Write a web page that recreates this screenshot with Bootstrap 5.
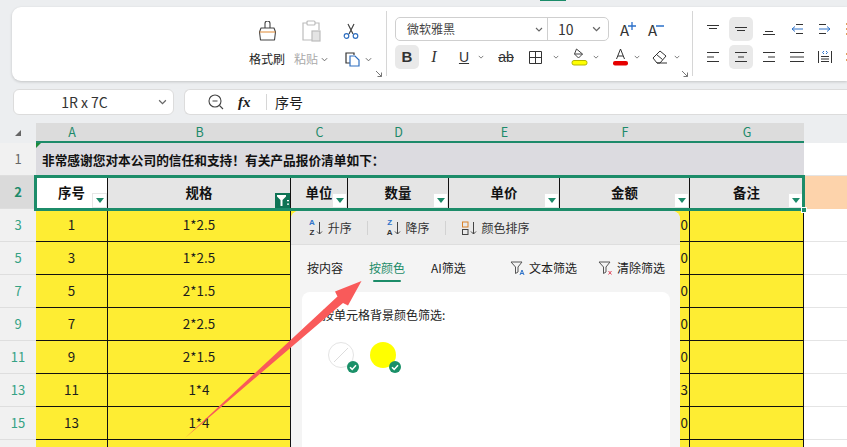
<!DOCTYPE html>
<html lang="zh-CN">
<head>
  <meta charset="UTF-8" />
  <title>表格筛选</title>
  <link href="https://cdn.jsdelivr.net/npm/bootstrap@5.3.0/dist/css/bootstrap.min.css" rel="stylesheet">
  <style>
    html, body { height: 447px; overflow: hidden; }
    body {
      background: #eceef0;
      color: #1c1c1c;
      font-family: "Noto Sans CJK SC", "Liberation Sans", sans-serif;
      font-size: 12px;
      width: 847px;
      position: relative;
    }
    svg { display: block; flex: none; }
    .top-strip { height: 7px; }
    .top-mark { width: 26px; height: 1px; margin-left: 540px; background: #1a8c69; }

    .ribbon {
      height: 74px;
      margin-left: 12px;
      background: #fff;
      border-radius: 9px 0 0 9px;
      box-shadow: 0 1px 3px rgba(0,0,0,.18);
      padding-left: 233px;
      overflow: hidden;
    }
    .rb-group { position: relative; height: 74px; flex: none; }
    .rb-group-clip { width: 141px; }
    .rb-sep { width: 1px; height: 65px; margin-top: 4px; background: #d6d6d6; flex: none; }
    .rb-launch { position: absolute; right: 3px; bottom: 3px; }
    .clip-grid { display: grid; grid-template-columns: 44px 44px 36px; grid-template-rows: 27px 24px; row-gap: 3px; padding-top: 10px; width: 124px; }
    .clip-cell { display: flex; align-items: center; justify-content: center; gap: 3px; }
    .clip-copy { justify-content: flex-start; padding-left: 12px; gap: 5px; white-space: nowrap; }
    .clip-label { font-size: 12px; line-height: 24px; white-space: nowrap; }
    .is-muted { color: #a9a9a9; }
    .font-col { width: 305px; padding-top: 10px; padding-left: 8px; }
    .font-pick { height: 24px; border: 1px solid #cfcfcf; border-radius: 5px; width: 214px; display: flex; font-size: 12px; }
    .font-name { width: 152px; padding-left: 11px; display: flex; align-items: center; justify-content: space-between; padding-right: 4px; border-right: 1px solid #cfcfcf; color: #444; }
    .font-size-box { flex: 1; display: flex; align-items: center; justify-content: space-between; padding: 0 7px 0 10px; font-size: 14px; color: #333; }
    .grow-btns { position: absolute; left: 233px; top: 10px; display: flex; gap: 10px; font-size: 15px; line-height: 26px; color: #333; }
    .grow-btn { width: 18px; position: relative; }
    .grow-mark { position: absolute; left: 8px; top: 5px; }
    .fmt-row { display: flex; align-items: center; height: 24px; margin-top: 4px; position: relative; }
    .fmt-btn { width: 24px; height: 24px; border-radius: 5px; display: flex; align-items: center; justify-content: center; font-size: 14px; color: #333; flex: none; }
    .fmt-on { background: #e9e9e9; }
    .fmt-bold { font-weight: 700; font-family: "Liberation Sans", sans-serif; font-size: 15px; }
    .fmt-ital { font-style: italic; font-family: "Liberation Serif", serif; font-size: 16px; margin-left: 3px; }
    .fmt-und { text-decoration: underline; font-family: "Liberation Sans", sans-serif; margin-left: 6px; }
    .fmt-ab { text-decoration: line-through; font-family: "Liberation Sans", sans-serif; margin-left: 8px; }
    .fmt-m5 { margin-left: 5px; }
    .fmt-m6 { margin-left: 6px; }
    .fmt-m7 { margin-left: 7px; }
    .chev-slot { width: 10px; display: flex; justify-content: center; flex: none; }
    .align-grid { display: grid; grid-template-columns: repeat(6, 24px); grid-auto-rows: 24px; gap: 4px; padding: 10px 0 0 8px; }
    .align-btn { border-radius: 5px; display: flex; align-items: center; justify-content: center; }

    .bar-row { height: 26px; margin: 8px 0 8px 13px; gap: 10px; }
    .name-box, .formula-box { background: #fff; border: 1px solid #dcdcdc; border-radius: 6px; display: flex; align-items: center; }
    .name-box { width: 161px; justify-content: center; position: relative; font-size: 14px; color: #333; flex: none; padding-right: 18px; }
    .name-box svg { position: absolute; right: 6px; top: 9px; }
    .formula-box { flex: 1; border-right: 0; border-radius: 6px 0 0 6px; padding-left: 23px; font-size: 14px; }
    .fx-mark { font-family: "Liberation Serif", serif; font-style: italic; font-weight: 700; font-size: 15px; margin-left: 14px; width: 17px; }
    .fx-sep { width: 1px; height: 16px; background: #d6d6d6; margin: 0 8px 0 11px; }

    .sheet-wrap { height: 324px; overflow: hidden; }
    .sheet { table-layout: fixed; border-collapse: separate; border-spacing: 0; width: 847px; font-size: 13.4px; }
    .sheet td, .sheet th { padding: 0; text-align: center; vertical-align: middle; overflow: hidden; white-space: nowrap; position: relative; font-weight: 400; }
    .col-row { height: 20px; }
    .col-row th { background: #dcdcdc; color: #1d8a6a; font-size: 12.5px; line-height: 1; border-bottom: 2px solid #1d8a6a; }
    .col-row .sheet-corner { background: #eceef0; border-bottom: 0; }
    .col-row .sheet-rest { background: #eceef0; border-bottom: 0; }
    .corner-mark { margin: 0 0 0 14px; }
    .sheet .row-no { background: #f1f1f1; color: #35a284; font-size: 13px; border-bottom: 1px solid #dedede; }
    .title-row { height: 33px; }
    .title-row td.title-cell { background: #dcdbe0; text-align: left; padding-left: 6px; font-weight: 700; font-size: 12.7px; color: #111; overflow: visible; }
    .sheet .title-row .row-no { color: #666; }
    .title-tick { position: absolute; left: 0; top: 0; width: 0; height: 0; border-top: 5px solid #1d8a3a; border-right: 5px solid transparent; }
    .head-row { height: 33px; }
    .head-row td { background: #e5e5e5; font-weight: 700; border-right: 1px solid #111; color: #111; }
    .head-row td.first-head { background: #fff; }
    .sheet .head-row .row-no { background: #dadada; color: #1d8a6a; border-right: 0; }
    .sheet .head-row .peach { background: #fdd3ab; border-right: 0; }
    .data-row { height: 33px; }
    .data-row td { background: #feed33; border-right: 1px solid #111; border-bottom: 1px solid #111; color: #1c1c1c; padding-bottom: 1px; }
    .data-row td.num-cell { text-align: right; padding-right: 1px; }
    .sheet .data-row .row-no { border-right: 0; border-bottom: 1px solid #dedede; }
    .sheet .data-row .blank { background: #fff; border-right: 0; border-bottom: 1px solid #e4e4e4; }
    .title-row .blank { background: #fff; border-bottom: 1px solid #e4e4e4; }

    .drop-btn { position: absolute; right: 0; bottom: 1px; width: 15px; height: 15px; background: #fff; border: 1px solid #e6e6e6; }
    .drop-btn::after { content: ""; position: absolute; left: 2.5px; top: 4px; border-left: 4px solid transparent; border-right: 4px solid transparent; border-top: 5px solid #1d8a6a; }
    .drop-active { background: #0e7355; border: 0; display: flex; align-items: center; justify-content: center; }
    .drop-active::after { display: none; }

    .sel-box { position: absolute; left: 34px; top: 175px; width: 771px; height: 36px; border: 3px solid #1c8c69; pointer-events: none; }
    .sel-box::after { content: ""; position: absolute; right: -5px; bottom: -5px; width: 6px; height: 6px; background: #1c8c69; border: 1px solid #fff; }

    .filter-pop { position: absolute; left: 291px; top: 211px; width: 389px; height: 236px; background: #f4f4f4; border-radius: 8px 8px 0 0; overflow: hidden; }
    .pop-tools { height: 34px; background: #e9e9e9; border-bottom: 1px solid #dedede; padding-left: 18px; display: flex; align-items: center; }
    .pop-tool { display: flex; align-items: center; gap: 5px; color: #333; }
    .pop-div { width: 1px; height: 14px; background: #d2d2d2; margin: 0 19px 0 15px; }
    .pop-div-b { margin-right: 16px; }
    .sort-az { display: flex; flex-direction: column; font-size: 8px; line-height: 9.5px; font-weight: 700; font-family: "Liberation Sans", sans-serif; text-align: center; }
    .sort-az span { display: block; }
    .sort-blue { color: #2f73c9; }
    .sort-mix { display: flex; align-items: center; gap: 1px; }
    .pop-tabs { height: 47px; padding: 12px 0 0 16px; display: flex; align-items: flex-start; }
    .pop-tab { width: 62px; line-height: 22px; flex: none; position: relative; }
    .pop-tab-on { color: #1c8c69; }
    .pop-tab-on::after { content: ""; position: absolute; left: 4px; top: 23px; width: 28px; height: 2px; background: #1c8c69; border-radius: 1px; }
    .pop-tab-ai { width: 79px; }
    .pop-act { display: flex; align-items: center; gap: 3px; line-height: 22px; width: 88px; flex: none; }
    .pop-card { background: #fff; margin: 0 10px 0 11px; height: 155px; border-radius: 8px 8px 0 0; padding: 13px 0 0 20px; }
    .pop-hint { line-height: 20px; color: #222; }
    .swatch-row { display: flex; gap: 16px; margin-top: 17px; margin-left: 6px; }
    .swatch { width: 26px; height: 26px; border-radius: 50%; position: relative; }
    .swatch-none { border: 1px solid #e4e4e4; background: #fff; }
    .swatch-yellow { background: #ffff00; }
    .swatch-check { position: absolute; right: -5px; bottom: -5px; width: 12px; height: 12px; border-radius: 50%; background: #1a9068; display: flex; align-items: center; justify-content: center; }
    .swatch-none .swatch-check { right: -6px; bottom: -6px; }
    .note-arrow { position: absolute; left: 0; top: 0; pointer-events: none; }
  </style>
</head>
<body>
  <svg width="0" height="0" class="position-absolute">
    <symbol id="chev" viewBox="0 0 8 5"><path d="M1 1l3 3 3-3" fill="none" stroke="#666" stroke-width="1.1"/></symbol>
    <symbol id="launch" viewBox="0 0 8 8"><path d="M1 1l5.500 5.500M2.500 6.500h4v-4" fill="none" stroke="#777" stroke-width="1"/></symbol>
    <symbol id="tick" viewBox="0 0 10 10"><path d="M2 5.200l2.200 2.200L8 3.200" fill="none" stroke="#fff" stroke-width="1.500"/></symbol>
  </svg>

  <div class="top-strip"><div class="top-mark"></div></div>

  <div class="ribbon d-flex">
    <div class="rb-group rb-group-clip">
      <div class="clip-grid">
        <div class="clip-cell">
          <svg width="19" height="20" viewBox="0 0 19 20" fill="none" stroke="#444" stroke-width="1.100" stroke-linejoin="round"><path d="M7 7V2.500a2.500 2.500 0 0 1 5 0V7M3 7h13l1.500 4-1 8H2.500l-1-8z"/><path d="M1.500 11h16" stroke="#e08a35"/></svg>
        </div>
        <div class="clip-cell">
          <svg width="20" height="22" viewBox="0 0 20 22" fill="none" stroke="#bcbcbc" stroke-width="1.200"><path d="M6 3H2v17h9M14 3h4v7"/><rect x="6" y="1" width="8" height="4" rx="1"/><rect x="11" y="11" width="8" height="10" fill="#e4e4e4"/></svg>
        </div>
        <div class="clip-cell">
          <svg width="16" height="16" viewBox="0 0 16 16" fill="none" stroke-width="1.200"><path d="M5 1l5 10M11 1L6 11" stroke="#444"/><circle cx="3.500" cy="13" r="2.300" stroke="#2f6fc0"/><circle cx="12.500" cy="13" r="2.300" stroke="#2f6fc0"/></svg>
        </div>
        <div class="clip-cell clip-label">格式刷</div>
        <div class="clip-cell clip-label is-muted">粘贴<svg width="7" height="5"><use href="#chev"/></svg></div>
        <div class="clip-cell clip-copy">
          <svg width="15" height="15" viewBox="0 0 15 15" fill="none" stroke-width="1.200"><path d="M9 3V1H1v10h4" stroke="#333"/><path d="M5 4h5l4 4v6H5z" stroke="#2f6fc0"/></svg>
          <svg width="7" height="5"><use href="#chev"/></svg>
        </div>
      </div>
      <svg class="rb-launch" width="8" height="8"><use href="#launch"/></svg>
    </div>
    <div class="rb-sep"></div>

    <div class="rb-group font-col">
      <div class="font-pick">
        <div class="font-name">微软雅黑<svg width="8" height="5"><use href="#chev"/></svg></div>
        <div class="font-size-box">10<svg width="9" height="6"><use href="#chev"/></svg></div>
      </div>
      <div class="grow-btns">
        <span class="grow-btn">A<svg class="grow-mark" width="8" height="8" stroke="#2a6fc9" stroke-width="1.300"><path d="M0 4h8M4 0v8"/></svg></span>
        <span class="grow-btn">A<svg class="grow-mark" width="8" height="8" stroke="#2a6fc9" stroke-width="1.300"><path d="M0 4h8"/></svg></span>
      </div>
      <div class="fmt-row">
        <span class="fmt-btn fmt-on fmt-bold">B</span>
        <span class="fmt-btn fmt-ital">I</span>
        <span class="fmt-btn fmt-und">U</span>
        <span class="chev-slot"><svg width="6" height="4"><use href="#chev"/></svg></span>
        <span class="fmt-btn fmt-ab">ab</span>
        <span class="fmt-btn fmt-m5"><svg width="15" height="15" viewBox="0 0 15 15" fill="none" stroke="#333"><path d="M1.500 1.500h12v12h-12zM7.500 1.500v12M1.500 7.500h12"/></svg></span>
        <span class="chev-slot ms-1"><svg width="6" height="4"><use href="#chev"/></svg></span>
        <span class="fmt-btn fmt-m6"><svg width="17" height="18" viewBox="0 0 17 18" fill="none"><path d="M5.500 1l6 5-4 4-4-4zM3.500 6h8" stroke="#444"/><rect x="1" y="12.500" width="15" height="4.500" rx="2" fill="#ffff00" stroke="#b5b500"/></svg></span>
        <span class="chev-slot"><svg width="6" height="4"><use href="#chev"/></svg></span>
        <span class="fmt-btn fmt-m7"><svg width="17" height="18" viewBox="0 0 17 18" fill="none"><path d="M4.500 11L8.500 1l4 10M6 8h5" stroke="#333"/><rect x="1" y="13" width="15" height="4.500" rx="2" fill="#e60000"/></svg></span>
        <span class="chev-slot"><svg width="6" height="4"><use href="#chev"/></svg></span>
        <span class="fmt-btn fmt-m6"><svg width="16" height="16" viewBox="0 0 16 16" fill="none" stroke="#333"><path d="M1 9l7-7 6 5-6 7H5zM4.500 5.500l6 5M5 14h10"/></svg></span>
        <span class="chev-slot"><svg width="6" height="4"><use href="#chev"/></svg></span>
      </div>
      <svg class="rb-launch" width="8" height="8"><use href="#launch"/></svg>
    </div>
    <div class="rb-sep"></div>

    <div class="rb-group">
      <div class="align-grid">
        <div class="align-btn"><svg width="14" height="14" stroke="#333"><path d="M1 3.500h12M3 6.500h8"/></svg></div>
        <div class="align-btn fmt-on"><svg width="14" height="14" stroke="#333"><path d="M1 5.500h12M3 8.500h8"/></svg></div>
        <div class="align-btn"><svg width="14" height="14" stroke="#333"><path d="M3 9.500h8M1 12.500h12"/></svg></div>
        <div class="align-btn"><svg width="14" height="14" fill="none" stroke="#333"><path d="M6 2.500h7M6 11.500h7"/><path d="M13 7H2M5 4.500L2 7l3 2.500" stroke="#2f73c9"/></svg></div>
        <div class="align-btn"><svg width="14" height="14" fill="none" stroke="#333"><path d="M1 2.500h7M1 11.500h7"/><path d="M1 7h11M9 4.500L12 7l-3 2.500" stroke="#2f73c9"/></svg></div>
        <div class="align-btn"><svg width="14" height="14" stroke="#d9822b" stroke-width="1.500"><path d="M0 2h14M0 7h14M0 12h14"/></svg></div>
        <div class="align-btn"><svg width="14" height="14" stroke="#333"><path d="M1 2.500h12M1 7h7M1 11.500h12"/></svg></div>
        <div class="align-btn fmt-on"><svg width="14" height="14" stroke="#333"><path d="M1 2.500h12M4 7h6M1 11.500h12"/></svg></div>
        <div class="align-btn"><svg width="14" height="14" stroke="#333"><path d="M1 2.500h12M6 7h7M1 11.500h12"/></svg></div>
        <div class="align-btn"><svg width="14" height="14" stroke="#333"><path d="M0 2.500h14M0 7h14M0 11.500h14"/></svg></div>
        <div class="align-btn"><svg width="14" height="14" fill="none" stroke="#333"><path d="M.5 1v12M13.500 1v12M3 6.500h8M3 9h8M3 11.500h8"/><path d="M6 1L4.500 2.500 6 4M8 1l1.500 1.500L8 4" stroke="#2f73c9"/></svg></div>
        <div class="align-btn"><svg width="14" height="14" stroke="#d9822b" stroke-width="1.500"><path d="M2 1v12M0 4h14M0 10h14"/></svg></div>
      </div>
    </div>
  </div>

  <div class="bar-row d-flex">
    <div class="name-box">1R x 7C<svg width="9" height="6"><use href="#chev"/></svg></div>
    <div class="formula-box">
      <svg width="16" height="16" viewBox="0 0 16 16" fill="none" stroke="#444" stroke-width="1.100"><circle cx="7" cy="7" r="6"/><path d="M4.500 7h5M11.500 11.500L15 15"/></svg>
      <span class="fx-mark">fx</span>
      <span class="fx-sep"></span>
      <span>序号</span>
    </div>
  </div>

  <div class="sheet-wrap">
  <table class="sheet">
    <colgroup>
      <col style="width:36px"><col style="width:72px"><col style="width:183px"><col style="width:57px"><col style="width:101px"><col style="width:111px"><col style="width:130px"><col style="width:114px"><col>
    </colgroup>
    <tr class="col-row">
      <th class="sheet-corner"><svg class="corner-mark" width="8" height="8"><path d="M7 1v6H1z" fill="#666"/></svg></th>
      <th>A</th><th>B</th><th>C</th><th>D</th><th>E</th><th>F</th><th>G</th><th class="sheet-rest"></th>
    </tr>
    <tr class="title-row">
      <td class="row-no">1</td>
      <td class="title-cell" colspan="7"><span class="title-tick"></span>非常感谢您对本公司的信任和支持！有关产品报价清单如下：</td>
      <td class="blank"></td>
    </tr>
    <tr class="head-row">
      <td class="row-no">2</td>
      <td class="first-head">序号<span class="drop-btn"></span></td>
      <td>规格<span class="drop-btn drop-active"><svg width="12" height="11" viewBox="0 0 12 11" fill="#fff"><path d="M0 0h9v1.500L5.500 5v6h-2V5L0 1.500zM10 5h2v1.200h-2zM10 8.500h2v1.200h-2z"/></svg></span></td>
      <td>单位<span class="drop-btn"></span></td>
      <td>数量<span class="drop-btn"></span></td>
      <td>单价<span class="drop-btn"></span></td>
      <td>金额<span class="drop-btn"></span></td>
      <td>备注<span class="drop-btn"></span></td>
      <td class="peach"></td>
    </tr>
    <tr class="data-row"><td class="row-no">3</td><td>1</td><td>1*2.5</td><td></td><td></td><td></td><td class="num-cell">0</td><td></td><td class="blank"></td></tr>
    <tr class="data-row"><td class="row-no">5</td><td>3</td><td>1*2.5</td><td></td><td></td><td></td><td class="num-cell">0</td><td></td><td class="blank"></td></tr>
    <tr class="data-row"><td class="row-no">7</td><td>5</td><td>2*1.5</td><td></td><td></td><td></td><td class="num-cell">0</td><td></td><td class="blank"></td></tr>
    <tr class="data-row"><td class="row-no">9</td><td>7</td><td>2*2.5</td><td></td><td></td><td></td><td class="num-cell">0</td><td></td><td class="blank"></td></tr>
    <tr class="data-row"><td class="row-no">11</td><td>9</td><td>2*1.5</td><td></td><td></td><td></td><td class="num-cell">0</td><td></td><td class="blank"></td></tr>
    <tr class="data-row"><td class="row-no">13</td><td>11</td><td>1*4</td><td></td><td></td><td></td><td class="num-cell">3</td><td></td><td class="blank"></td></tr>
    <tr class="data-row"><td class="row-no">15</td><td>13</td><td>1*4</td><td></td><td></td><td></td><td class="num-cell">0</td><td></td><td class="blank"></td></tr>
    <tr class="data-row"><td class="row-no"></td><td></td><td></td><td></td><td></td><td></td><td></td><td></td><td class="blank"></td></tr>
  </table>
  </div>

  <div class="sel-box"></div>

  <div class="filter-pop">
    <div class="pop-tools">
      <div class="pop-tool">
        <span class="sort-mix"><span class="sort-az"><span class="sort-blue">A</span><span>Z</span></span><svg width="7" height="14" fill="none" stroke="#444"><path d="M3.500 1v12M1 10.500L3.500 13 6 10.500"/></svg></span>升序
      </div>
      <span class="pop-div"></span>
      <div class="pop-tool">
        <span class="sort-mix"><span class="sort-az"><span class="sort-blue">Z</span><span>A</span></span><svg width="7" height="14" fill="none" stroke="#444"><path d="M3.500 1v12M1 10.500L3.500 13 6 10.500"/></svg></span>降序
      </div>
      <span class="pop-div pop-div-b"></span>
      <div class="pop-tool">
        <span class="sort-mix"><svg width="7" height="14" fill="none"><rect x=".5" y="1" width="5.500" height="5" stroke="#d9822b"/><rect x=".5" y="8.500" width="5.500" height="5" stroke="#444"/></svg><svg width="7" height="14" fill="none" stroke="#444"><path d="M3.500 1v12M1 10.500L3.500 13 6 10.500"/></svg></span>颜色排序
      </div>
    </div>
    <div class="pop-tabs">
      <span class="pop-tab">按内容</span>
      <span class="pop-tab pop-tab-on">按颜色</span>
      <span class="pop-tab pop-tab-ai">AI筛选</span>
      <span class="pop-act">
        <svg width="16" height="16" viewBox="0 0 16 16" fill="none"><path d="M1 2h11L8 7v5L5.500 13.500V7z" stroke="#555"/><path d="M10 15l2-5 2 5M11 13.500h2" stroke="#2f73c9"/></svg>文本筛选
      </span>
      <span class="pop-act">
        <svg width="16" height="16" viewBox="0 0 16 16" fill="none"><path d="M1 2h11L8 7v5L5.500 13.500V7z" stroke="#555"/><path d="M10.500 11l3 3.500M13.500 11l-3 3.500" stroke="#e0455a"/></svg>清除筛选
      </span>
    </div>
    <div class="pop-card">
      <div class="pop-hint">按单元格背景颜色筛选:</div>
      <div class="swatch-row">
        <div class="swatch swatch-none">
          <svg width="24" height="24" fill="none" stroke="#dcdcdc"><path d="M5 19L19 5"/></svg>
          <span class="swatch-check"><svg width="10" height="10"><use href="#tick"/></svg></span>
        </div>
        <div class="swatch swatch-yellow">
          <span class="swatch-check"><svg width="10" height="10"><use href="#tick"/></svg></span>
        </div>
      </div>
    </div>
  </div>

  <svg class="note-arrow" width="847" height="447"><polygon points="185,438 337.500,296.500 335,291.500 361.500,281 348,305.500 343,303" fill="#f95a5a"/></svg>

  <script src="https://cdn.jsdelivr.net/npm/bootstrap@5.3.0/dist/js/bootstrap.bundle.min.js"></script>
</body>
</html>
